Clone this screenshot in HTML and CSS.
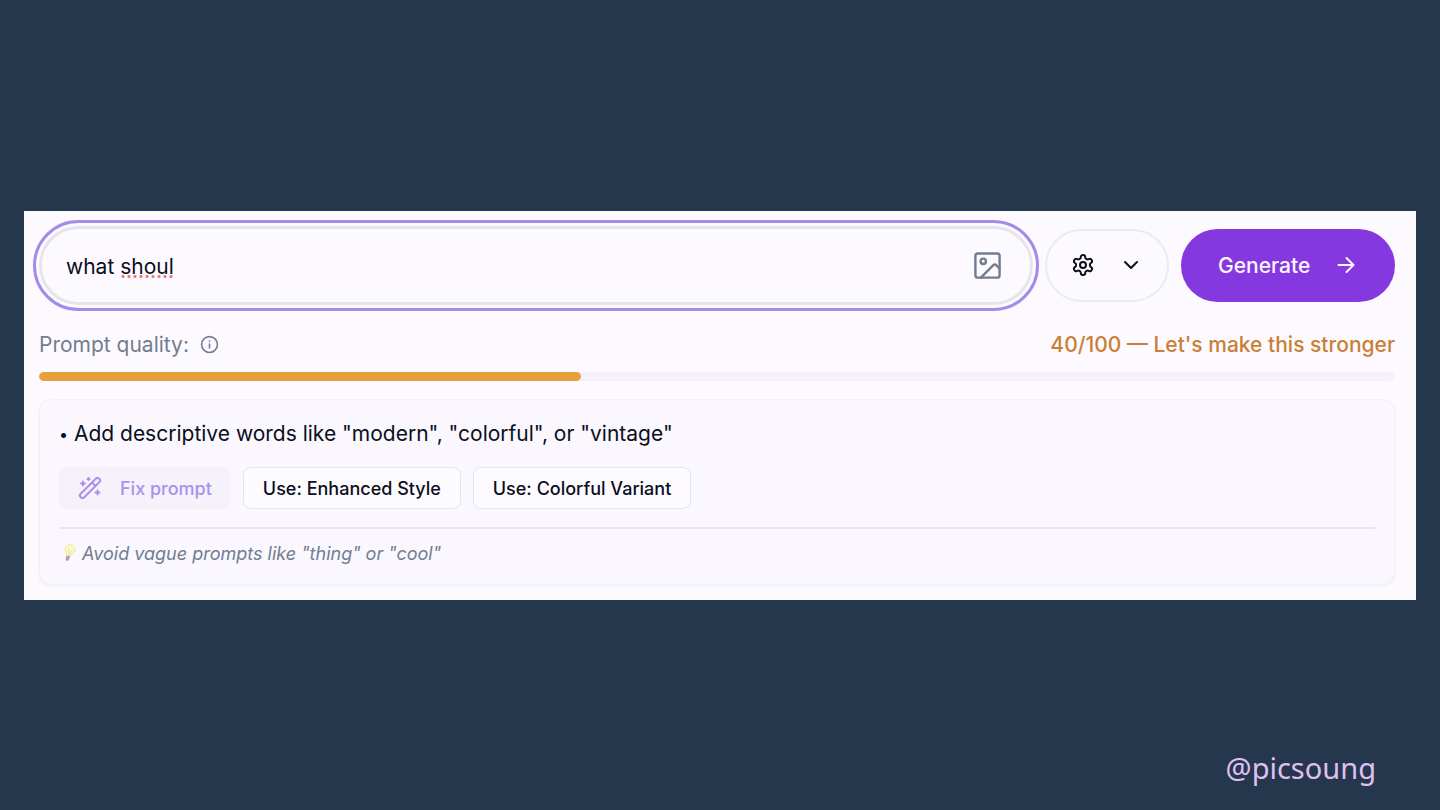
FILE: index.html
```html
<!DOCTYPE html>
<html lang="en">
<head>
    <meta charset="UTF-8">
    <meta name="viewport" content="width=device-width, initial-scale=1.0">
    <title>Prompt quality</title>
    <link rel="stylesheet" href="styles.css">
</head>
<body>
    <main class="panel">
        <form class="prompt-row">
            <div class="prompt-box">
                <input type="text" class="prompt-input" aria-label="Prompt" value="what shoul" spellcheck="false">
                <span class="misspelled"></span>
                <button type="button" class="image-button" aria-label="Add image">
                    <svg class="icon-image" viewBox="0 0 24 24">
                        <rect x="2" y="2" width="20" height="20" rx="2"/>
                        <circle cx="8.5" cy="8.5" r="2.2"/>
                        <path d="M22 14.5l-2.6-2.6a2 2 0 0 0-2.8 0L6.5 22"/>
                    </svg>
                </button>
            </div>
            <button type="button" class="settings-button" aria-label="Settings">
                <svg class="icon-gear" viewBox="0 0 24 24">
                    <path d="M12.22 2h-.44a2 2 0 0 0-2 2v.18a2 2 0 0 1-1 1.73l-.43.25a2 2 0 0 1-2 0l-.15-.08a2 2 0 0 0-2.73.73l-.22.38a2 2 0 0 0 .73 2.73l.15.1a2 2 0 0 1 1 1.72v.51a2 2 0 0 1-1 1.74l-.15.09a2 2 0 0 0-.73 2.73l.22.38a2 2 0 0 0 2.73.73l.15-.08a2 2 0 0 1 2 0l.43.25a2 2 0 0 1 1 1.73V20a2 2 0 0 0 2 2h.44a2 2 0 0 0 2-2v-.18a2 2 0 0 1 1-1.73l.43-.25a2 2 0 0 1 2 0l.15.08a2 2 0 0 0 2.73-.73l.22-.39a2 2 0 0 0-.73-2.73l-.15-.08a2 2 0 0 1-1-1.74v-.5a2 2 0 0 1 1-1.74l.15-.09a2 2 0 0 0 .73-2.73l-.22-.38a2 2 0 0 0-2.73-.73l-.15.08a2 2 0 0 1-2 0l-.43-.25a2 2 0 0 1-1-1.73V4a2 2 0 0 0-2-2z"/>
                    <circle cx="12" cy="12" r="3"/>
                </svg>
                <svg class="icon-chevron" viewBox="0 0 24 24">
                    <path d="M6 9l6 6 6-6"/>
                </svg>
            </button>
            <button type="button" class="generate-button">
                Generate
                <svg class="icon-arrow" viewBox="0 0 24 24">
                    <path d="M4.500 12h15M12.500 5l7 7-7 7"/>
                </svg>
            </button>
        </form>

        <div class="quality-row">
            <span class="quality-label">
                Prompt quality:
                <svg class="icon-info" viewBox="0 0 24 24">
                    <circle cx="12" cy="12" r="10"/>
                    <path d="M12 16.500v-5M12 7.700v.1"/>
                </svg>
            </span>
            <span class="quality-score">40/100 — Let's make this stronger</span>
        </div>
        <div class="quality-bar">
            <div class="quality-fill" style="width: 40%"></div>
        </div>

        <section class="tips">
            <p class="tip"><span class="bullet">•</span> Add descriptive words like "modern", "colorful", or "vintage"</p>
            <div class="tip-actions">
                <button type="button" class="tip-button fix">
                    <svg class="icon-wand" viewBox="0 0 24 24">
                        <rect x="-1" y="9.500" width="26" height="5" rx="2" transform="rotate(-45 12 12)"/>
                        <path d="M14.500 7l2.500 2.500M5 5.500v4M3 7.500h4M19.500 14.500v4M17.500 16.500h4M10.500 2v2M9.500 3h2"/>
                    </svg>
                    Fix prompt
                </button>
                <button type="button" class="tip-button">Use: Enhanced Style</button>
                <button type="button" class="tip-button">Use: Colorful Variant</button>
            </div>
            <p class="tip-note">
                <svg class="icon-bulb" viewBox="0 0 14 20">
                    <g transform="rotate(10 7 10)">
                        <path class="glass" d="M4.500 13.500C4 11 1 9.500 1.500 5.500 2 2.500 4.500 1 7.500 1s5.500 2 5 5.500c-.5 3-3.500 4-4.200 7z"/>
                        <path class="filament" d="M5.500 6l1 6.500M9.500 6l-2 6.500"/>
                        <path class="base" d="M4 13.500h4.500L7.500 18l-2 1.200L4 18z"/>
                    </g>
                </svg>
                Avoid vague prompts like "thing" or "cool"
            </p>
        </section>
    </main>
    <footer class="handle">@picsoung</footer>
</body>
</html>
```
FILE: styles.css
```css
* {
    box-sizing: border-box;
}
body {
    margin: 0;
    min-height: 100vh;
    padding: 0 24px;
    display: grid;
    grid-template-rows: 1fr auto 1fr;
    background-color: #25374c;
    color: #0b0f1c;
    font-family: Inter, "Liberation Sans", sans-serif;
    font-size: 21px;
}
button {
    font-family: inherit;
    font-weight: 500;
    color: inherit;
    cursor: pointer;
}
p {
    margin: 0;
}
svg {
    flex: none;
    fill: none;
    stroke: currentColor;
    stroke-width: 2;
    stroke-linecap: round;
    stroke-linejoin: round;
}
.panel {
    grid-row: 2;
    padding: 15px 21px 15px 15px;
    background-color: #fdfaff;
}
.prompt-row {
    display: flex;
    align-items: center;
    gap: 12px;
}
.prompt-box {
    position: relative;
    flex: 1;
    display: flex;
    align-items: center;
    height: 79px;
    padding: 0 28px 0 24px;
    border: 3px solid #e4e6ee;
    border-radius: 40px;
    outline: 3px solid #a48bea;
    outline-offset: 3px;
}
.prompt-input {
    flex: 1;
    min-width: 0;
    padding: 2px 0 0;
    border: none;
    outline: none;
    background: none;
    color: inherit;
    font: inherit;
}
/* spelling mark under the last word */
.misspelled {
    position: absolute;
    left: 78px;
    bottom: 24px;
    width: 54px;
    height: 3px;
    background: radial-gradient(circle, #ea7474 1px, transparent 2px) 0 0 / 6px 3px;
}
.image-button {
    display: flex;
    padding: 0;
    border: none;
    background: none;
    color: #727d90;
}
.icon-image {
    width: 29px;
    height: 29px;
}
.settings-button {
    display: flex;
    align-items: center;
    justify-content: space-between;
    width: 124px;
    height: 73px;
    padding: 0 24px;
    border: 2px solid #ebebf2;
    border-radius: 37px;
    background: none;
}
.icon-gear,
.icon-chevron,
.icon-arrow {
    width: 24px;
    height: 24px;
}
.generate-button {
    display: flex;
    align-items: center;
    justify-content: space-between;
    width: 214px;
    height: 73px;
    padding: 0 37px;
    border: none;
    border-radius: 37px;
    background-color: #8638e0;
    color: #fbf5ff;
    font-size: 21px;
}
.quality-row {
    display: flex;
    align-items: center;
    justify-content: space-between;
    margin-top: 26px;
    line-height: 28px;
}
.quality-label {
    display: flex;
    align-items: center;
    gap: 11px;
    color: #727d90;
}
.icon-info {
    width: 19px;
    height: 19px;
}
.quality-score {
    color: #c97f35;
    font-weight: 500;
}
.quality-bar {
    height: 9px;
    margin-top: 13px;
    border-radius: 5px;
    background-color: #f4f1fb;
    overflow: hidden;
}
.quality-fill {
    height: 100%;
    border-radius: 5px;
    background-color: #e6a039;
}
.tips {
    margin-top: 18px;
    padding: 18px 19px 17px;
    border: 1px solid #f2f0f8;
    border-radius: 12px;
    background-color: #faf7fe;
    box-shadow: 0 1px 3px #efecf6;
}
.tip {
    line-height: 32px;
}
.bullet {
    font-size: 16px;
    line-height: 16px;
    vertical-align: 1px;
}
.tip-actions {
    display: flex;
    gap: 12px;
    margin-top: 17px;
}
.tip-button {
    display: flex;
    align-items: center;
    gap: 18px;
    height: 42px;
    padding: 1px 19px 0;
    border: 1px solid #e4e4ee;
    border-radius: 8px;
    background-color: #fdfbff;
    font-size: 18px;
}
.fix {
    padding: 1px 18px 0;
    border-color: #f5f2fc;
    background-color: #f5f2fc;
    color: #aa90ea;
}
.icon-wand {
    width: 24px;
    height: 24px;
}
.tip-note {
    display: flex;
    align-items: center;
    gap: 6px;
    margin-top: 18px;
    padding: 11px 0 0 4px;
    border-top: 2px solid #e8e7f0;
    color: #727d90;
    font-size: 18px;
    font-style: italic;
    line-height: 27px;
}
.icon-bulb {
    width: 13px;
    height: 18px;
}
.glass {
    fill: #fbf8c9;
    stroke: #eee79b;
    stroke-width: 1;
}
.filament {
    stroke: #e9dfa0;
    stroke-width: 1;
}
.base {
    fill: #aaa3b0;
    stroke: none;
}
.handle {
    grid-row: 3;
    align-self: end;
    justify-self: end;
    padding: 0 40px 22px 0;
    color: #dfbff0;
    font-family: "Noto Sans", sans-serif;
    font-size: 29px;
    line-height: 40px;
}
```
